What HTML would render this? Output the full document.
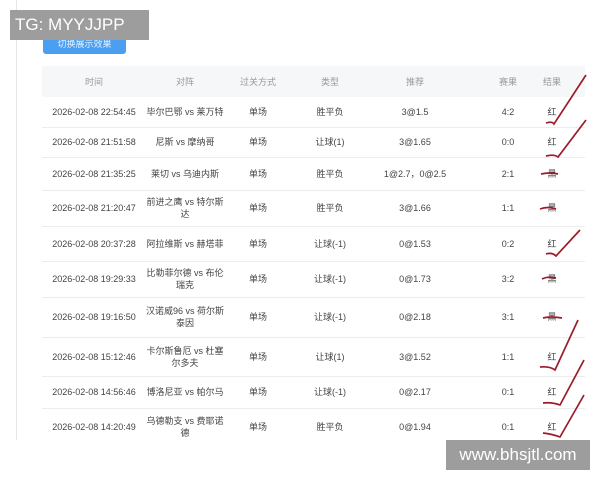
<!DOCTYPE html>
<html><head><meta charset="utf-8"><style>
body{margin:0;width:600px;height:480px;background:#fff;position:relative;overflow:hidden;font-family:"Liberation Sans","Noto Sans CJK SC",sans-serif;color:#444;font-size:9px}
.vl{position:absolute;left:16px;top:0;width:1px;height:440px;background:#e6e6e6}
.btn{position:absolute;left:43px;top:30px;width:83px;height:24px;background:#4a9ff0;border-radius:3px;color:#e8f2ff;font-size:9px;text-align:center;line-height:28px}
.tg{position:absolute;left:10px;top:10px;width:139px;height:30px;background:#9d9d9d;color:#fff;font-size:17px;line-height:30px;padding-left:5px;box-sizing:border-box}
.wm{position:absolute;left:446px;top:440px;width:144px;height:30px;background:#9d9d9d;color:#fff;font-size:17px;line-height:30px;text-align:center}
.row{position:absolute;left:42px;width:543px;border-bottom:1px solid #ececec}
.row span{position:absolute;top:50%;transform:translate(-50%,-50%);text-align:center;line-height:12px;white-space:nowrap}
.hd{background:#f6f7f9;color:#999;border:none}
</style></head><body>
<div class="vl"></div>
<div class="btn">切换展示效果</div>
<div class="row hd" style="top:66px;height:31px"><span style="left:52px">时间</span><span style="left:143px">对阵</span><span style="left:216px">过关方式</span><span style="left:288px">类型</span><span style="left:373px">推荐</span><span style="left:466px">赛果</span><span style="left:510px">结果</span></div>
<div class="row" style="top:97px;height:30px"><span style="left:52px">2026-02-08 22:54:45</span><span style="left:143px">毕尔巴鄂 vs 莱万特</span><span style="left:216px">单场</span><span style="left:288px">胜平负</span><span style="left:373px">3@1.5</span><span style="left:466px">4:2</span><span style="left:510px">红</span></div>
<div class="row" style="top:127px;height:30px"><span style="left:52px">2026-02-08 21:51:58</span><span style="left:143px">尼斯 vs 摩纳哥</span><span style="left:216px">单场</span><span style="left:288px">让球(1)</span><span style="left:373px">3@1.65</span><span style="left:466px">0:0</span><span style="left:510px">红</span></div>
<div class="row" style="top:157px;height:33px"><span style="left:52px">2026-02-08 21:35:25</span><span style="left:143px">莱切 vs 乌迪内斯</span><span style="left:216px">单场</span><span style="left:288px">胜平负</span><span style="left:373px">1@2.7，0@2.5</span><span style="left:466px">2:1</span><span style="left:510px">黑</span></div>
<div class="row" style="top:190px;height:36px"><span style="left:52px">2026-02-08 21:20:47</span><span style="left:143px">前进之鹰 vs 特尔斯<br>达</span><span style="left:216px">单场</span><span style="left:288px">胜平负</span><span style="left:373px">3@1.66</span><span style="left:466px">1:1</span><span style="left:510px">黑</span></div>
<div class="row" style="top:226px;height:35px"><span style="left:52px">2026-02-08 20:37:28</span><span style="left:143px">阿拉维斯 vs 赫塔菲</span><span style="left:216px">单场</span><span style="left:288px">让球(-1)</span><span style="left:373px">0@1.53</span><span style="left:466px">0:2</span><span style="left:510px">红</span></div>
<div class="row" style="top:261px;height:36px"><span style="left:52px">2026-02-08 19:29:33</span><span style="left:143px">比勒菲尔德 vs 布伦<br>瑞克</span><span style="left:216px">单场</span><span style="left:288px">让球(-1)</span><span style="left:373px">0@1.73</span><span style="left:466px">3:2</span><span style="left:510px">黑</span></div>
<div class="row" style="top:297px;height:40px"><span style="left:52px">2026-02-08 19:16:50</span><span style="left:143px">汉诺威96 vs 荷尔斯<br>泰因</span><span style="left:216px">单场</span><span style="left:288px">让球(-1)</span><span style="left:373px">0@2.18</span><span style="left:466px">3:1</span><span style="left:510px">黑</span></div>
<div class="row" style="top:337px;height:39px"><span style="left:52px">2026-02-08 15:12:46</span><span style="left:143px">卡尔斯鲁厄 vs 杜塞<br>尔多夫</span><span style="left:216px">单场</span><span style="left:288px">让球(1)</span><span style="left:373px">3@1.52</span><span style="left:466px">1:1</span><span style="left:510px">红</span></div>
<div class="row" style="top:376px;height:32px"><span style="left:52px">2026-02-08 14:56:46</span><span style="left:143px">博洛尼亚 vs 帕尔马</span><span style="left:216px">单场</span><span style="left:288px">让球(-1)</span><span style="left:373px">0@2.17</span><span style="left:466px">0:1</span><span style="left:510px">红</span></div>
<div class="row" style="top:408px;height:38px;border:none"><span style="left:52px">2026-02-08 14:20:49</span><span style="left:143px">乌德勒支 vs 费耶诺<br>德</span><span style="left:216px">单场</span><span style="left:288px">胜平负</span><span style="left:373px">0@1.94</span><span style="left:466px">0:1</span><span style="left:510px">红</span></div>
<svg style="position:absolute;left:0;top:0" width="600" height="480" fill="none" stroke="#9b1c2a" stroke-width="1.7">
<path d="M546 123 Q552 121 554 124 L586 75"/>
<path d="M546 156 Q554 154 558 157 L586 120"/>
<path d="M541 174 Q550 172 558 174"/>
<path d="M540 209 Q548 206 556 209"/>
<path d="M546 254 Q552 252 556 256 L580 230"/>
<path d="M542 279 Q548 276 556 278"/>
<path d="M543 318 Q550 316 562 318"/>
<path d="M540 367 Q550 366 555 370 L578 320"/>
<path d="M543 403 Q552 402 560 405 L584 360"/>
<path d="M543 433 Q552 434 560 437 L584 395"/>
</svg>
<div class="tg">TG: MYYJJPP</div>
<div class="wm">www.bhsjtl.com</div>
</body></html>
